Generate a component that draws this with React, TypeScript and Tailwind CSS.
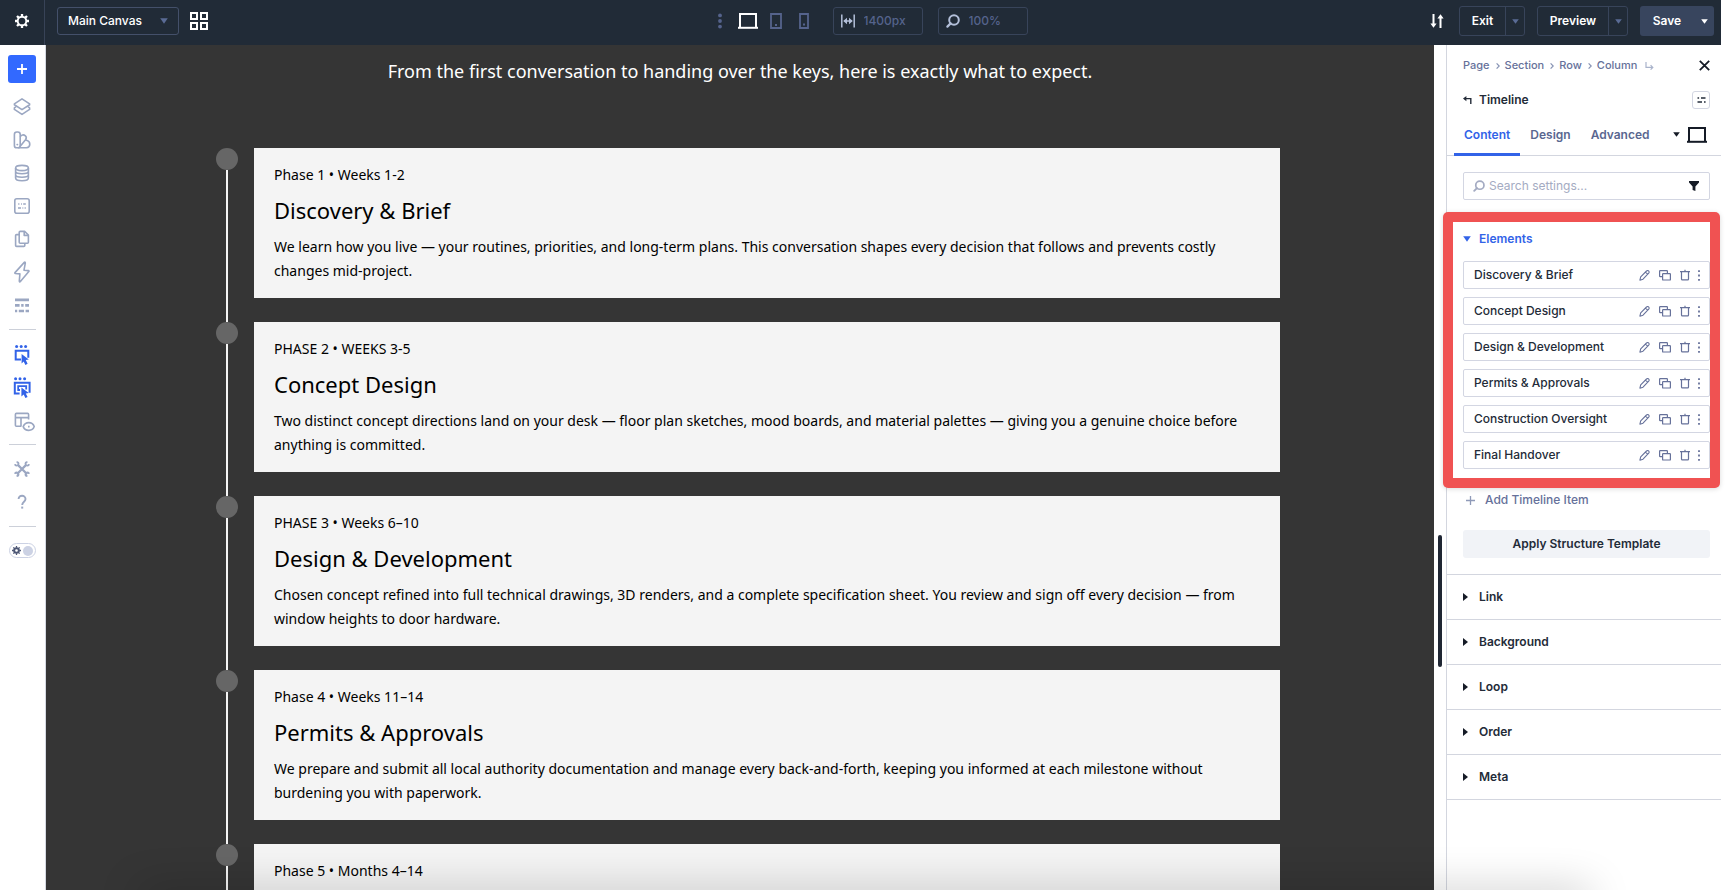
import React from 'react';

type IconProps = { className?: string };

const phases = [
  {
    label: 'Phase 1 • Weeks 1-2',
    title: 'Discovery & Brief',
    body: 'We learn how you live — your routines, priorities, and long-term plans. This conversation shapes every decision that follows and prevents costly changes mid-project.',
  },
  {
    label: 'PHASE 2 • WEEKS 3-5',
    title: 'Concept Design',
    body: 'Two distinct concept directions land on your desk — floor plan sketches, mood boards, and material palettes — giving you a genuine choice before anything is committed.',
  },
  {
    label: 'PHASE 3 • Weeks 6–10',
    title: 'Design & Development',
    body: 'Chosen concept refined into full technical drawings, 3D renders, and a complete specification sheet. You review and sign off every decision — from window heights to door hardware.',
  },
  {
    label: 'Phase 4 • Weeks 11–14',
    title: 'Permits & Approvals',
    body: 'We prepare and submit all local authority documentation and manage every back-and-forth, keeping you informed at each milestone without burdening you with paperwork.',
  },
  {
    label: 'Phase 5 • Months 4–14',
  },
];

const elements = [
  'Discovery & Brief',
  'Concept Design',
  'Design & Development',
  'Permits & Approvals',
  'Construction Oversight',
  'Final Handover',
];

const sections = ['Link', 'Background', 'Loop', 'Order', 'Meta'];

function Gear({ className }: IconProps) {
  return (
    <svg viewBox="0 0 16 16" className={className} fill="none" stroke="currentColor" aria-hidden="true">
      <circle cx="8" cy="8" r="4.3" strokeWidth="1.9" />
      <g strokeWidth="2.3">
        <path d="M8 3.6V1M8 12.4V15M3.6 8H1M12.4 8H15M4.9 4.9 3 3M11.1 11.1 13 13M4.9 11.1 3 13M11.1 4.9 13 3" />
      </g>
    </svg>
  );
}

function Caret({ className }: IconProps) {
  return (
    <svg viewBox="0 0 8 6" preserveAspectRatio="none" className={className} fill="currentColor" aria-hidden="true">
      <path d="M.2.2h7.6L4 5.8z" />
    </svg>
  );
}

function Laptop({ className }: IconProps) {
  return (
    <svg viewBox="0 0 20 16" className={className} fill="none" stroke="currentColor" aria-hidden="true">
      <path d="M2 14.5V1h16v13.5" strokeWidth="2" />
      <path d="M0 14.8h20" strokeWidth="2" />
    </svg>
  );
}

function Magnifier({ className }: IconProps) {
  return (
    <svg viewBox="0 0 14 14" className={className} fill="none" stroke="currentColor" aria-hidden="true">
      <circle cx="8" cy="6" r="4.8" strokeWidth="2" />
      <path d="M4.6 9.4 1.4 12.6" strokeWidth="2.2" strokeLinecap="round" />
    </svg>
  );
}

function Dots({ className }: IconProps) {
  return (
    <svg viewBox="0 0 4 16" className={className} fill="currentColor" aria-hidden="true">
      <circle cx="2" cy="2.4" r="1.9" />
      <circle cx="2" cy="8" r="1.9" />
      <circle cx="2" cy="13.6" r="1.9" />
    </svg>
  );
}

const railTop: { name: string; art: React.ReactNode }[] = [
  {
    name: 'Layers',
    art: (
      <g strokeWidth="1.6" strokeLinejoin="round">
        <path d="M9 .8 16.600 5.800v1L9 11.600 1.400 6.800v-1z" />
        <path d="M3 8.600 1.400 9.800v1.600L9 16.400l7.600-5V9.800L15 8.600" />
      </g>
    ),
  },
  {
    name: 'Design variables',
    art: (
      <g strokeWidth="1.6" strokeLinejoin="round">
        <rect x="1.4" y="1" width="5.800" height="15.800" rx="2.400" />
        <path d="M7.2 5.600c1-1.800 3.400-2.400 5.200-.8 1.400 1.300 1 2.700.1 4L7 15.600" />
        <path d="M12.3 9.200h1.200c4.400 1 4.400 7-.1 7.500H4.800" />
        <path d="M4.100 13.600h.4" strokeLinecap="round" />
      </g>
    ),
  },
  {
    name: 'Data',
    art: (
      <g strokeWidth="1.6">
        <ellipse cx="9" cy="4" rx="6.400" ry="2.600" />
        <path d="M2.600 4v10c0 1.500 2.900 2.700 6.400 2.700s6.400-1.200 6.400-2.700V4M2.600 7.300c0 1.500 2.900 2.500 6.400 2.500s6.400-1 6.400-2.500M2.600 10.800c0 1.500 2.900 2.500 6.400 2.500s6.400-1 6.400-2.500" />
      </g>
    ),
  },
  {
    name: 'Presets',
    art: (
      <g strokeWidth="1.6">
        <rect x="1.800" y="1.800" width="14.400" height="14.400" rx="2" />
        <path d="M5.200 7h1.200M8 7h.9M10.200 7h2.600M5 11h3M9.400 11h.9M11.600 11h1.200" strokeWidth="1.500" />
      </g>
    ),
  },
  {
    name: 'Pages',
    art: (
      <g strokeWidth="1.600" strokeLinejoin="round">
        <path d="M7.200 1.400h4.400l3.800 3.600v7.200c0 .7-.4 1-1 1H7.200c-.7 0-1-.4-1-1V2.400c0-.7.300-1 1-1z" />
        <path d="M11.200 1.600v3.800h4M6.200 4.600H3.600c-.7 0-1 .4-1 1v9.800c0 .7.300 1 1 1h7.200c.6 0 1-.3 1-1v-2.200" />
      </g>
    ),
  },
  {
    name: 'Interactions',
    art: <path d="M11.300-.6 2 9.600c-.3.400-.2.800.4.900l4.500.4-.6 7.200c0 1 .6 1.100 1.100.5L15.800 8.600c.4-.5.2-.9-.4-1L11 7.200 12.300.2c.1-1-.5-1.300-1-.8z" strokeWidth="1.600" strokeLinejoin="round" />,
  },
  {
    name: 'Content structure',
    art: (
      <path d="M2 3.800h14M2 9.400h4.600M8.200 9.400h2.400M12.200 9.400H16M2 15h2.200M5.800 15H11M12.600 15H16" strokeWidth="2.700" />
    ),
  },
];

const railModes: { name: string; color: string; art: React.ReactNode }[] = [
  {
    name: 'Click mode',
    color: 'text-[#3263e8]',
    art: (
      <g>
        <path d="M8 13.400H2.700V4.800h12.600v7" strokeWidth="2" />
        <g fill="currentColor" stroke="none">
          <circle cx="3.600" cy=".4" r="1.500" />
          <circle cx="8.200" cy=".4" r="1.500" />
          <circle cx="12.600" cy=".4" r="1.500" />
          <path d="m8.600 8 7.200 5.600-3 .5 1.800 3.700-2.200 1.100-1.700-3.500-2.100 2z" />
        </g>
      </g>
    ),
  },
  {
    name: 'Grid mode',
    color: 'text-[#3263e8]',
    art: (
      <g>
        <path d="M6.600 14.400H1.800V3.800h14.800v10" strokeWidth="2" />
        <path d="M7 11H5.200V7.200h8v3.400" strokeWidth="1.800" />
        <g fill="currentColor" stroke="none">
          <circle cx="2.600" cy="-.2" r="1.500" />
          <circle cx="7" cy="-.2" r="1.500" />
          <circle cx="11.600" cy="-.2" r="1.500" />
          <path d="m8.400 8.400 7.400 5.600-3 .5 1.800 3.500-2.200 1.100-1.700-3.500-2.300 2z" />
        </g>
      </g>
    ),
  },
  {
    name: 'Preview mode',
    color: 'text-[#9ba7c2]',
    art: (
      <g strokeWidth="1.600">
        <path d="M8.400 14.200H3.400c-.6 0-1-.3-1-1V2.400c0-.6.4-1 1-1h11.200c.7 0 1 .4 1 1v5M2.400 5.600h13.200M8 5.600v8.600" />
        <path d="M10.200 14.600c1-2.600 3-4 5.600-4s4.600 1.400 5.400 4c-.8 2.500-2.800 3.800-5.400 3.800s-4.600-1.300-5.600-3.800z" fill="#fff" />
        <path d="M15 14.600h1.600" strokeWidth="1.800" />
      </g>
    ),
  },
];

function RailButton({ name, color, children }: { name: string; color: string; children: React.ReactNode }) {
  return (
    <button type="button" aria-label={name} className={`flex h-[33px] w-7 shrink-0 items-center justify-center ${color}`}>
      <svg viewBox="0 0 18 18" className="size-[18px] overflow-visible" fill="none" stroke="currentColor" aria-hidden="true">
        {children}
      </svg>
    </button>
  );
}

function TopBar() {
  return (
    <header className="flex h-[45px] shrink-0 items-stretch bg-[#212b37] text-white">
      <button type="button" aria-label="Settings" className="flex w-[45px] shrink-0 items-center justify-center border-r border-[#384357] pb-[3px]">
        <Gear className="size-4" />
      </button>
      <div className="flex flex-1 items-center gap-[11px] pb-[3px] pl-3">
        <div className="flex h-7 w-[122px] items-center rounded-[3px] border border-[#44506a] pr-2.5">
          <select aria-label="Canvas" className="min-w-0 flex-1 appearance-none bg-transparent pl-2.5 text-[12px] font-medium outline-none">
            <option>Main Canvas</option>
          </select>
          <Caret className="h-[6px] w-2 text-[#5a6b95]" />
        </div>
        <button type="button" aria-label="Canvas grid" className="flex">
          <svg viewBox="0 0 18 18" className="size-[18px]" fill="none" stroke="currentColor" strokeWidth="2" aria-hidden="true">
            <path d="M1 1h6v6H1zM11 1h6v6h-6zM1 11h6v6H1zM11 11h6v6h-6z" />
          </svg>
        </button>
      </div>
      <div className="flex items-center pb-[3px] pr-[26px] text-[#55638c]">
        <button type="button" aria-label="More views" className="mr-4 flex"><Dots className="h-4 w-1" /></button>
        <button type="button" aria-label="Desktop" className="mr-3 flex text-white"><Laptop className="h-4 w-5" /></button>
        <button type="button" aria-label="Tablet" className="mr-[17px] flex">
          <svg viewBox="0 0 12 16" className="h-4 w-3" fill="none" stroke="currentColor" strokeWidth="1.800" aria-hidden="true">
            <path d="M1 1h10v14H1zM5 12h2" />
          </svg>
        </button>
        <button type="button" aria-label="Phone" className="mr-6 flex">
          <svg viewBox="0 0 10 16" className="h-4 w-2.5" fill="none" stroke="currentColor" strokeWidth="1.800" aria-hidden="true">
            <path d="M1 1h8v14H1zM4 11.500h2" />
          </svg>
        </button>
        <label className="mr-[15px] flex h-7 w-[90px] items-center gap-[9px] rounded-[3px] border border-[#38445a] pl-[7px]">
          <svg viewBox="0 0 14 14" className="size-3.5 shrink-0 text-[#b3bfd9]" fill="none" stroke="currentColor" aria-hidden="true">
            <path d="M.8.5v13M13.200.5v13M3 7h8" strokeWidth="1.500" />
            <path d="M2.200 7 6 3.800v6.400zM11.800 7 8 3.800v6.400z" fill="currentColor" stroke="none" />
          </svg>
          <input aria-label="Canvas width" defaultValue="1400px" className="w-full min-w-0 bg-transparent text-[12px] font-medium outline-none" />
        </label>
        <label className="flex h-7 w-[90px] items-center gap-[9px] rounded-[3px] border border-[#38445a] pl-[7px]">
          <Magnifier className="size-3.5 shrink-0 text-[#b3bfd9]" />
          <input aria-label="Zoom level" defaultValue="100%" className="w-full min-w-0 bg-transparent text-[12px] font-medium outline-none" />
        </label>
      </div>
      <div className="flex flex-1 items-center justify-end pb-[3px] pr-[7px] text-[12px] font-semibold">
        <button type="button" aria-label="Sort" className="mr-[15px] flex">
          <svg viewBox="0 0 14 14" className="size-3.5" fill="none" stroke="currentColor" strokeWidth="2" aria-hidden="true">
            <path d="M3.500 0v10M10.500 14V4" />
            <path d="M.4 9.400h6.200l-3.100 4.400zM7.400 4.600h6.200L10.500.2z" fill="currentColor" stroke="none" />
          </svg>
        </button>
        <div className="mr-3 flex h-[30px] w-[66px] rounded-[3px] border border-[#38445a]">
          <button type="button" className="flex-1">Exit</button>
          <button type="button" aria-label="Exit options" className="flex w-[19px] items-center justify-center border-l border-[#38445a] text-[#5a6b95]"><Caret className="h-[5px] w-[7px]" /></button>
        </div>
        <div className="mr-3 flex h-[30px] w-[91px] rounded-[3px] border border-[#38445a]">
          <button type="button" className="flex-1">Preview</button>
          <button type="button" aria-label="Preview options" className="flex w-[19px] items-center justify-center border-l border-[#38445a] text-[#5a6b95]"><Caret className="h-[5px] w-[7px]" /></button>
        </div>
        <div className="flex h-[30px] w-[74px] rounded-[3px] bg-[#38455e]">
          <button type="button" className="flex-1">Save</button>
          <button type="button" aria-label="Save options" className="flex w-5 items-center justify-center"><Caret className="h-[5px] w-[7px]" /></button>
        </div>
      </div>
    </header>
  );
}

function Rail() {
  return (
    <nav aria-label="Builder tools" className="flex w-[46px] shrink-0 flex-col items-center border-r border-[#d5d9e2] bg-white pr-px pt-2.5">
      <button type="button" aria-label="Add element" className="mb-[7px] flex size-7 shrink-0 items-center justify-center rounded-[3px] bg-[#3269ff] text-white">
        <svg viewBox="0 0 10 10" className="size-2.5" stroke="currentColor" strokeWidth="1.800" aria-hidden="true"><path d="M5 0v10M0 5h10" /></svg>
      </button>
      {railTop.map((t) => (
        <RailButton key={t.name} name={t.name} color="text-[#9ba7c2]">{t.art}</RailButton>
      ))}
      <hr className="my-2 w-[27px] border-[#ccd0d9]" />
      {railModes.map((t) => (
        <RailButton key={t.name} name={t.name} color={t.color}>{t.art}</RailButton>
      ))}
      <hr className="my-[7px] w-[27px] border-[#ccd0d9]" />
      <RailButton name="Tools" color="text-[#9ba7c2]">
        <path d="m4.600 4.600 9.600 9.600M13.400 4.600l-9.600 9.600" strokeWidth="2.200" />
        <path d="M2 4.200c.2 2 3.200 2 3.500-.2C5.600 2.800 4.800 2 3.600 1.800M16 4.200c-.2 2-3.200 2-3.500-.2-.1-1.200.7-2 1.900-2.200M2 13.800c.2-2 3.200-2 3.500.2.100 1.200-.7 2-1.900 2.200M16 13.800c-.2-2-3.200-2-3.500.2-.1 1.200.7 2 1.900 2.200" strokeWidth="1.800" />
      </RailButton>
      <RailButton name="Help" color="text-[#9ba7c2]">
        <path d="M5.600 6C5.600 1.600 12.600 1.800 12.500 6c0 2.800-3.300 2.600-3.300 6" strokeWidth="1.900" />
        <path d="M9.200 13.600v2" strokeWidth="2" />
      </RailButton>
      <hr className="my-2 w-[27px] border-[#ccd0d9]" />
      <button type="button" role="switch" aria-checked="false" aria-label="Dark mode" className="mt-2 flex h-[15px] w-[27px] shrink-0 items-center justify-between rounded-full border border-[#ccd2e4] px-[2px]">
        <svg viewBox="0 0 10 10" className="size-[9px] text-[#4d5775]" fill="none" stroke="currentColor" aria-hidden="true">
          <circle cx="5" cy="5" r="2.600" strokeWidth="2.200" />
          <path d="M5 0v2M5 8v2M0 5h2M8 5h2M1.500 1.500l1.400 1.400M7.100 7.100l1.400 1.400M8.500 1.500 7.100 2.900M2.900 7.100 1.500 8.500" strokeWidth="1.400" />
        </svg>
        <span className="size-2.5 rounded-full bg-[#ccd2e4]" />
      </button>
    </nav>
  );
}

function Canvas() {
  return (
    <main className="min-w-0 flex-1 overflow-hidden bg-[#353535] font-['Noto_Sans','Open_Sans',sans-serif] font-[450]">
      <p className="pt-[11px] text-center text-[18px] leading-[30px] text-white">
        From the first conversation to handing over the keys, here is exactly what to expect.
      </p>
      <ol className="mx-auto mt-[62px] flex max-w-[1080px] flex-col pl-4">
        {phases.map((p) => (
          <li key={p.label} className="flex gap-4">
            <div className="flex w-[22px] shrink-0 flex-col items-center">
              <span className="size-[22px] shrink-0 rounded-full bg-[#666]" />
              <span className="w-[2px] flex-1 bg-[#f4f4f4]" />
            </div>
            <article className="mb-6 min-h-[150px] flex-1 bg-[#f4f4f4] px-5 py-[15px] text-[14px] leading-6 text-black">
              <p>{p.label}</p>
              {p.title && <h2 className="mb-2.5 mt-2 text-[22px] leading-[30px]">{p.title}</h2>}
              {p.body && <p>{p.body}</p>}
            </article>
          </li>
        ))}
      </ol>
    </main>
  );
}

function ElementRow({ name }: { name: string }) {
  return (
    <li className="flex h-7 items-center rounded-[2px] border border-[#d3d6e2] pl-2.5 text-[#66719a]">
      <span className="flex-1 text-[12px] font-medium text-[#232b38]">{name}</span>
      <button type="button" aria-label={`Edit ${name}`} className="mr-[9px] flex">
        <svg viewBox="0 0 11 11" className="size-[11px]" fill="none" stroke="currentColor" strokeWidth="1.100" strokeLinejoin="round" aria-hidden="true">
          <path d="m.9 10.200.8-3.400L7.500 1q1.200-.9 2.200 0 .9 1 0 2.200L4 9.200zM6.600 2.200l2 2" />
        </svg>
      </button>
      <button type="button" aria-label={`Duplicate ${name}`} className="mr-[9px] flex">
        <svg viewBox="0 0 12 11" className="h-[11px] w-3" fill="none" stroke="currentColor" strokeWidth="1.200" aria-hidden="true">
          <path d="M3.600 6.600H1.200q-.6 0-.6-.6V1.200q0-.6.6-.6h6.600q.6 0 .6.6v2.200" />
          <rect x="3.600" y="3.600" width="7.800" height="6.400" rx=".6" />
        </svg>
      </button>
      <button type="button" aria-label={`Delete ${name}`} className="mr-2 flex">
        <svg viewBox="0 0 10 12" className="h-3 w-2.5" fill="none" stroke="currentColor" strokeWidth="1.200" aria-hidden="true">
          <path d="M0 2.600h10M5 .8v1.800M1.500 2.600V10q0 .9.900.9h5.200q.9 0 .9-.9V2.600" />
        </svg>
      </button>
      <button type="button" aria-label={`More options for ${name}`} className="mr-[9px] flex">
        <svg viewBox="0 0 2 11" className="h-[11px] w-0.5" fill="currentColor" aria-hidden="true">
          <path d="M.1.300h1.800v1.800H.1zM.1 4.600h1.800v1.800H.1zM.1 8.900h1.800v1.800H.1z" />
        </svg>
      </button>
    </li>
  );
}

function Panel() {
  const crumbs = ['Page', 'Section', 'Row', 'Column'];
  return (
    <aside className="w-[275px] shrink-0 border-l border-[#d3d6df] bg-white text-[12px] text-[#232b38]">
      <div className="flex h-[41px] items-center pl-4 pr-[11px]">
        <nav aria-label="Breadcrumb" className="flex flex-1 items-center text-[11px] font-medium text-[#66719a]">
          {crumbs.map((c, i) => (
            <React.Fragment key={c}>
              {i > 0 && (
                <svg viewBox="0 0 4 6" className="ml-[6px] mr-[5px] h-[6px] w-1 text-[#8793b4]" fill="none" stroke="currentColor" strokeWidth="1.200" aria-hidden="true"><path d="m.6.400 2.600 2.600L.6 5.600" /></svg>
              )}
              <a href="#">{c}</a>
            </React.Fragment>
          ))}
          <svg viewBox="0 0 9 8" className="ml-2 h-2 w-[9px] text-[#a9b3cb]" fill="none" stroke="currentColor" strokeWidth="1.200" aria-hidden="true"><path d="M1 0v5.400h6.500M5.600 3.200l2.200 2.200-2.200 2.200" /></svg>
        </nav>
        <button type="button" aria-label="Close panel" className="flex">
          <svg viewBox="0 0 11 11" className="size-[11px] text-[#151b26]" stroke="currentColor" strokeWidth="1.800" aria-hidden="true"><path d="m.8.8 9.400 9.400M10.200.8.8 10.200" /></svg>
        </button>
      </div>
      <div className="flex h-7 items-center pl-4 pr-[11px]">
        <button type="button" aria-label="Back" className="mr-[7px] flex">
          <svg viewBox="0 0 9 8" className="h-2 w-[9px]" fill="none" stroke="currentColor" strokeWidth="1.400" aria-hidden="true"><path d="M1 2.600h6.800V8" /><path d="M0 2.600 3.400 0v5.200z" fill="currentColor" stroke="none" /></svg>
        </button>
        <h1 className="flex-1 font-semibold">Timeline</h1>
        <button type="button" aria-label="Element presets" className="flex size-[18px] items-center justify-center rounded-[3px] border border-[#d3d6e2]">
          <svg viewBox="0 0 9 8" className="h-2 w-[9px]" stroke="currentColor" strokeWidth="1.700" aria-hidden="true"><path d="M.5 2h1.600M4 2h4.500M.5 6H5M7 6h1.600" /></svg>
        </button>
      </div>
      <div className="flex h-[42px] items-stretch border-b border-[#d3d6df] pl-[7px] pr-3.5 font-semibold text-[#5a6790]">
        <button type="button" className="-mb-px h-[42px] border-b-[3px] border-[#3263e8] px-[10px] pt-[3px] text-[#3263e8]">Content</button>
        <button type="button" className="ml-[10px]">Design</button>
        <button type="button" className="ml-5 flex-1 text-left">Advanced</button>
        <button type="button" aria-label="Responsive view" className="flex items-center gap-[7px] text-[#151b26]">
          <Caret className="h-[5px] w-[7px]" />
          <Laptop className="h-4 w-5" />
        </button>
      </div>
      <label className="ml-4 mr-[11px] mt-4 flex h-7 items-center rounded-[2px] border border-[#d3d6e2] px-[9px]">
        <Magnifier className="mr-1 size-3 text-[#a4abc2]" />
        <input type="text" aria-label="Search settings" placeholder="Search settings..." className="min-w-0 flex-1 bg-transparent outline-none placeholder:text-[#a4abc2]" />
        <svg viewBox="0 0 12 10" className="h-2.5 w-3 text-[#151b26]" fill="currentColor" aria-hidden="true"><path d="M1 0h10v1.400L7.400 5.600V10L4.600 9V5.600L1 1.400z" /></svg>
      </label>

      <section className="relative -ml-1 mr-px mt-3 rounded-[5px] bg-[#f05252] p-2.5 shadow-[0_1px_5px_rgba(0,0,0,0.15)]">
        <div className="bg-white pb-[9px] pl-2.5">
          <button type="button" aria-expanded="true" className="flex h-[39px] w-full items-center gap-2 pb-[5px] font-semibold text-[#3263e8]">
            <Caret className="h-[6px] w-2" />
            Elements
          </button>
          <ul className="flex flex-col gap-2">
            {elements.map((e) => <ElementRow key={e} name={e} />)}
          </ul>
        </div>
      </section>

      <button type="button" className="flex h-6 items-center gap-2.5 pl-[19px] font-medium text-[#66719a]">
        <svg viewBox="0 0 9 9" className="size-[9px] text-[#8f9ab8]" stroke="currentColor" strokeWidth="1.300" aria-hidden="true"><path d="M4.500 0v9M0 4.500h9" /></svg>
        Add Timeline Item
      </button>
      <div className="border-b border-[#d3d6df] pb-4 pl-4 pr-[11px] pt-[18px]">
        <button type="button" className="h-7 w-full rounded-[3px] bg-[#f1f3f7] font-semibold">Apply Structure Template</button>
      </div>
      {sections.map((s) => (
        <button key={s} type="button" aria-expanded="false" className="flex h-[45px] w-full items-center gap-[11px] border-b border-[#d3d6df] pl-4 font-semibold">
          <svg viewBox="0 0 5 8" className="h-2 w-[5px] text-[#151b26]" fill="currentColor" aria-hidden="true"><path d="M0 0v8l5-4z" /></svg>
          {s}
        </button>
      ))}
    </aside>
  );
}

export default function App() {
  return (
    <div className="relative flex h-screen flex-col overflow-hidden bg-white pr-[9px] font-['Inter',sans-serif]">
      <TopBar />
      <div className="flex min-h-0 flex-1">
        <Rail />
        <Canvas />
        <div className="flex w-3 shrink-0 justify-center bg-white pt-[490px]">
          <span className="h-[132px] w-1 rounded-full bg-[#1f2633]" />
        </div>
        <Panel />
      </div>
      <div className="pointer-events-none absolute -bottom-5 left-[140px] right-[140px] h-5 shadow-[0_0_40px_rgba(0,0,0,0.25)]" />
    </div>
  );
}
